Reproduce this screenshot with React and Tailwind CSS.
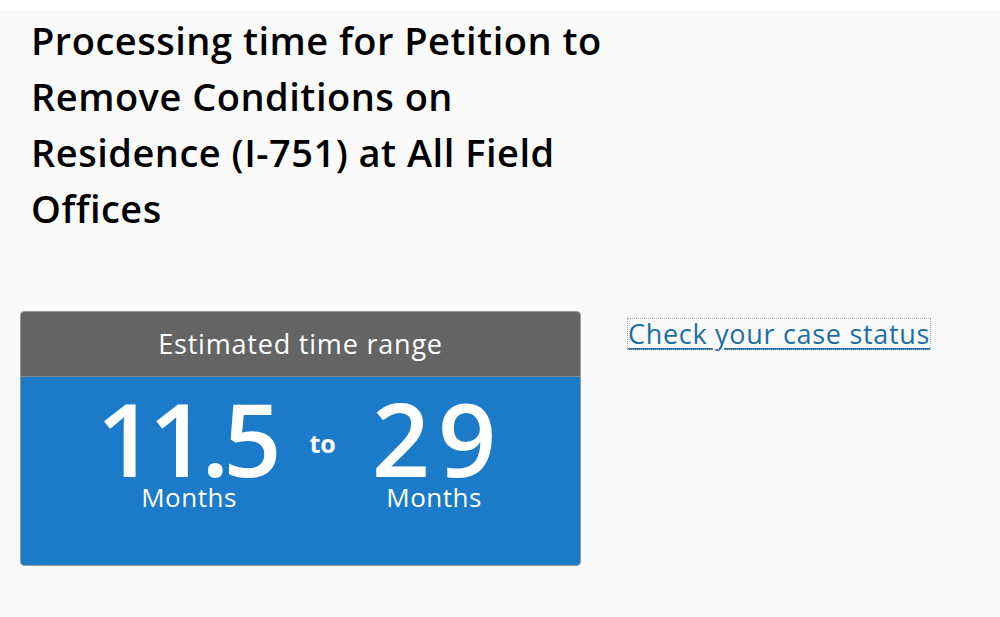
import React from 'react';

const Estimate = ({ value, tight }) => (
    <div className="flex flex-col items-center">
        <span className={`h-[80px] leading-[80px] text-[102px] font-semibold ${tight ? 'tracking-[-6px] pr-[6px]' : 'tracking-[8px] pl-[8px]'}`}>
            {value}
        </span>
        <span className="text-[26px] leading-[30px] tracking-[0.5px] mt-[4px]">Months</span>
    </div>
);

const App = () => {
    return (
        <div className="min-h-screen bg-white pt-[11px] font-['Open_Sans',sans-serif]">
            <div className="min-h-[606px] bg-[#fafafa] pl-[31px] pr-[20px]">
                <h1 className="text-[38px] leading-[56px] font-semibold text-black pt-[1px] tracking-[0.5px]">
                    Processing time for Petition to<br />
                    Remove Conditions on<br />
                    Residence (I-751) at All Field<br />
                    Offices
                </h1>

                <div className="flex items-start gap-[47px] mt-[75px] -ml-[11px]">
                    <div className="w-[561px] h-[255px] rounded-[4px] border border-[#9a9a9a] overflow-hidden flex flex-col">
                        <div className="h-[65px] bg-[#646464] border-b border-[#888] flex items-center justify-center text-white text-[27px] tracking-[0.8px]">
                            Estimated time range
                        </div>
                        <div className="flex-1 bg-[#1b7bc8] text-white flex justify-center items-start gap-[28px] pt-[21px]">
                            <Estimate value="11.5" tight />
                            <span className="text-[25px] font-bold mt-[27px]">to</span>
                            <Estimate value="29" />
                        </div>
                    </div>
                    <a
                        href="#"
                        className="mt-[8px] text-[27px] leading-[30px] tracking-[0.7px] text-[#1d6ea5] underline underline-offset-[4px] outline-1 outline-dotted outline-[#aaa]"
                    >
                        Check your case status
                    </a>
                </div>
            </div>
        </div>
    );
};

export default App;
